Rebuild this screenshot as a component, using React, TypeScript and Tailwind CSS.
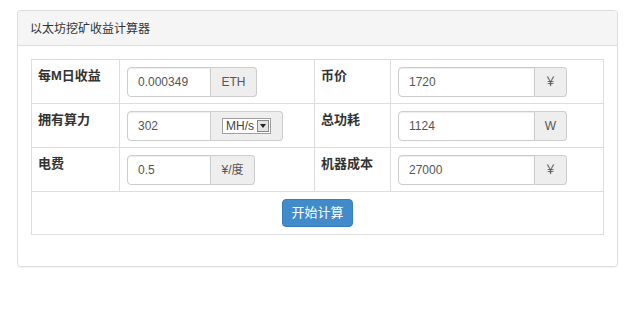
const cjk = { fontFamily: '"Liberation Sans", "Noto Sans CJK SC", sans-serif' };

function Field({
  value,
  unit,
  inputW,
  addonW,
  select,
}: {
  value: string;
  unit: string;
  inputW: string;
  addonW: string;
  select?: boolean;
}) {
  return (
    <div className="flex h-[30px]">
      <div
        className={`${inputW} h-full flex items-center pl-[10px] border border-[#cccccc] rounded-l-[4px] bg-white text-[12px] text-[#555555] shadow-[inset_0_1px_1px_rgba(0,0,0,0.075)]`}
      >
        {value}
      </div>
      <div
        className={`${addonW} h-full flex items-center justify-center border border-l-0 border-[#cccccc] rounded-r-[4px] bg-[#eeeeee] text-[12px] text-[#555555]`}
      >
        {select ? (
          <div className="flex items-center h-[16px] border border-[#a0a0a0] bg-white pl-[3px] pr-[1px] gap-[3px]">
            <span className="text-[12px] leading-none text-[#444]">{unit}</span>
            <span className="flex items-center justify-center w-[12px] h-[12px] border border-[#888] bg-[#e4e4e4]">
              <svg width="6" height="4" viewBox="0 0 6 4">
                <path d="M0 0H6L3 4Z" fill="#222" />
              </svg>
            </span>
          </div>
        ) : (
          unit
        )}
      </div>
    </div>
  );
}

export default function App() {
  const rows = [
    {
      l1: "每M日收益",
      f1: <Field value="0.000349" unit="ETH" inputW="w-[84px]" addonW="w-[46px]" />,
      l2: "币价",
      f2: <Field value="1720" unit="￥" inputW="w-[137px]" addonW="w-[32px]" />,
    },
    {
      l1: "拥有算力",
      f1: <Field value="302" unit="MH/s" inputW="w-[84px]" addonW="w-[72px]" select />,
      l2: "总功耗",
      f2: <Field value="1124" unit="W" inputW="w-[137px]" addonW="w-[32px]" />,
    },
    {
      l1: "电费",
      f1: <Field value="0.5" unit="¥/度" inputW="w-[84px]" addonW="w-[44px]" />,
      l2: "机器成本",
      f2: <Field value="27000" unit="￥" inputW="w-[137px]" addonW="w-[32px]" />,
    },
  ];

  return (
    <div className="w-[640px] h-[321px] bg-white pt-[10px] pl-[17px]" style={cjk}>
      <div className="w-[601px] border border-[#dddddd] rounded-[4px] shadow-[0_1px_1px_rgba(0,0,0,0.05)]">
        <div className="h-[35px] flex items-center pl-[12px] pt-[2px] bg-[#f5f5f5] border-b border-[#dddddd] rounded-t-[4px] text-[12px] text-[#333333]">
          以太坊挖矿收益计算器
        </div>
        <div className="px-[13px] pt-[13px] pb-[31px]">
          <table className="w-[572px] table-fixed border-collapse border border-[#dddddd]">
            <colgroup>
              <col className="w-[88px]" />
              <col className="w-[195px]" />
              <col className="w-[76px]" />
              <col className="w-[213px]" />
            </colgroup>
            <tbody>
              {rows.map((r) => (
                <tr key={r.l1}>
                  <td className="align-top border border-[#dddddd] pl-[6px] pt-[6px] text-[13px] leading-[20px] font-bold text-[#333333]">
                    {r.l1}
                  </td>
                  <td className="align-top border border-[#dddddd] pl-[7px] pt-[7px] pb-[6px]">{r.f1}</td>
                  <td className="align-top border border-[#dddddd] pl-[6px] pt-[6px] text-[13px] leading-[20px] font-bold text-[#333333]">
                    {r.l2}
                  </td>
                  <td className="align-top border border-[#dddddd] pl-[7px] pt-[7px] pb-[6px]">{r.f2}</td>
                </tr>
              ))}
              <tr>
                <td colSpan={4} className="border border-[#dddddd] pt-[7px] pb-[7px] text-center">
                  <button className="h-[28px] px-[8px] rounded-[4px] bg-[#428bca] border border-[#357ebd] text-white text-[13px]">
                    开始计算
                  </button>
                </td>
              </tr>
            </tbody>
          </table>
        </div>
      </div>
    </div>
  );
}
